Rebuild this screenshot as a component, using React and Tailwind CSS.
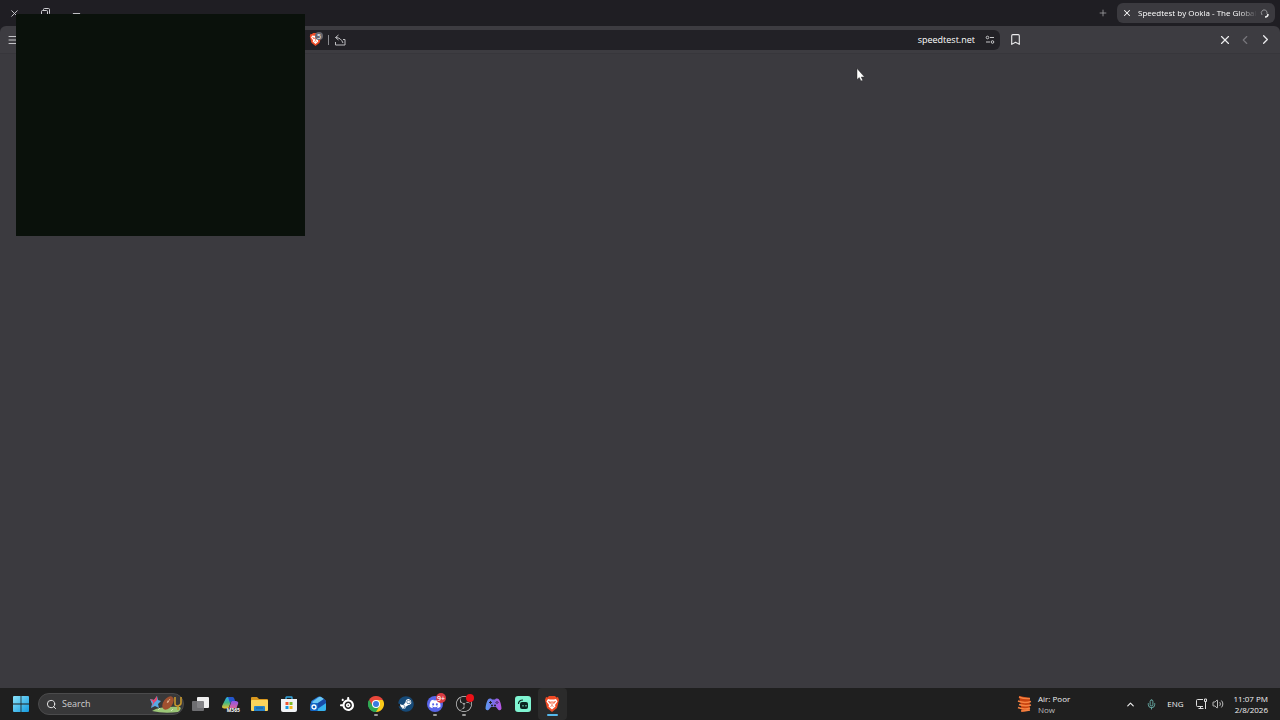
import React from 'react';
import { Bookmark, ChevronLeft, ChevronRight, ChevronUp, Menu, Mic, Minus, Plus, Search, Volume2, X } from 'lucide-react';
import { FaDiscord, FaSteam } from 'react-icons/fa';
import { SiObsstudio, SiSteelseries } from 'react-icons/si';

const WindowsLogo = () => (
  <svg width="16" height="16" viewBox="0 0 16 16">
    <defs>
      <linearGradient id="win" x1="0" y1="0" x2="1" y2="1">
        <stop offset="0" stopColor="#8be3fb" />
        <stop offset="1" stopColor="#149bdf" />
      </linearGradient>
    </defs>
    <path fill="url(#win)" d="M0 1a1 1 0 0 1 1-1h6.6v7.6H0zM8.4 0H15a1 1 0 0 1 1 1v6.6H8.4zM0 8.4h7.6V16H1a1 1 0 0 1-1-1zM8.4 8.4H16V15a1 1 0 0 1-1 1H8.4z" />
  </svg>
);

const FootballArt = () => (
  <svg width="32" height="18" viewBox="0 0 32 18">
    <path d="M2 16Q10 11 30 12Q32 14 28 17Q14 19 2 16z" fill="#9cc777" />
    <path d="M25 2v7q0 2 3 2q3-1 3-3V2M28 11v4" fill="none" stroke="#c7982c" strokeWidth="1.6" />
    <path d="M0 4l4 1 3-4 1 4 3 1-3 3 1 4-4-2-4 2 1-4z" fill="#58a9e4" />
    <path d="M0 4l4 1 3-4 0 4-3 3-2 4 1-5z" fill="#e8476c" />
    <ellipse cx="18" cy="8" rx="7.500" ry="4.500" transform="rotate(-54 18 8)" fill="#a0502f" />
    <path d="M17 8l3-4M17 6l2 1" stroke="#e9c5a4" strokeWidth=".8" />
    <path d="M8 15l2-2M21 16l2-2" stroke="#e9f3d6" strokeWidth=".7" />
  </svg>
);

const TaskView = () => (
  <svg width="17" height="16" viewBox="0 0 17 16">
    <rect x="5" y="1" width="12" height="11" rx="1" fill="#efefef" />
    <rect x="0" y="5" width="12" height="10" rx="1" fill="#77777a" opacity=".9" />
  </svg>
);

const CopilotIcon = () => (
  <span className="relative flex">
    <svg width="18" height="16" viewBox="0 0 18 16">
      <defs>
        <linearGradient id="copA" x1="0" y1="0" x2="0" y2="1">
          <stop offset="0" stopColor="#29a9f0" />
          <stop offset=".5" stopColor="#43b883" />
          <stop offset="1" stopColor="#f1c32e" />
        </linearGradient>
        <linearGradient id="copB" x1="0" y1="0" x2="0" y2="1">
          <stop offset="0" stopColor="#8c55e9" />
          <stop offset="1" stopColor="#f06a83" />
        </linearGradient>
      </defs>
      <path d="M5 2Q5.600 1 7 1h4.500L8 11Q7.500 12.500 6 12.500H3Q0 12 1.500 9z" fill="url(#copA)" />
      <path d="M7 1h4.500Q13 1 13.500 3l.5 2h-3Q9.500 5 9 7z" fill="#2456cd" />
      <path d="M10.500 5H15Q18 5.500 17 8l-1.500 4Q15 14 13 14H7.500z" fill="url(#copB)" />
    </svg>
    <span className="absolute -right-px -bottom-px bg-[#202020] text-[5px] leading-[5px] font-bold text-white">M365</span>
  </span>
);

const FolderIcon = () => (
  <svg width="17" height="16" viewBox="0 0 17 16">
    <path d="M0 2Q0 1 1 1h5l2 2h8q1 0 1 1v4H0z" fill="#d9981f" />
    <path d="M0 5Q0 4 1 4h15q1 0 1 1v9q0 1-1 1H1q-1 0-1-1z" fill="#fbd45c" />
    <path d="M3 15v-4q0-1 1-1h9q1 0 1 1v4z" fill="#2783c9" />
    <path d="M5 12h7" stroke="#155f9d" />
  </svg>
);

const StoreIcon = () => (
  <svg width="16" height="16" viewBox="0 0 16 16">
    <path d="M5 4V1.500Q5 1 5.500 1h5q.5 0 .5.500V4" fill="none" stroke="#35a9e2" strokeWidth="1.400" />
    <path d="M0 3h16v11q0 2-2 2H2q-2 0-2-2z" fill="#f1f3f5" />
    <path d="M4.500 6h3v3h-3z" fill="#ef5530" />
    <path d="M8.500 6h3v3h-3z" fill="#7fba28" />
    <path d="M4.500 10h3v3h-3z" fill="#1898e0" />
    <path d="M8.500 10h3v3h-3z" fill="#f5b71c" />
  </svg>
);

const OutlookIcon = () => (
  <svg width="16" height="16" viewBox="0 0 16 16">
    <path d="M1 6q0-1 1-1.500L8 .800q1.500-.8 3 0l4 3q1 .8 1 2V13q0 2-2 2H3q-2 0-2-2z" fill="#2474d5" />
    <path d="M2 6l7-5q1-.5 2 0l3 2-9 6z" fill="#69c6f4" />
    <path d="M5 15L16 7v6q0 2-2 2z" fill="#36b3ee" />
    <path d="M5 9l9-6 2 2.500V7l-9 6z" fill="#174ba8" />
    <rect x="0" y="7" width="8" height="8" rx="1.500" fill="#1265c4" />
    <circle cx="4" cy="11" r="2" fill="none" stroke="#fff" strokeWidth="1.300" />
  </svg>
);

const ChromeIcon = () => (
  <svg width="16" height="16" viewBox="0 0 16 16">
    <path d="M8 8L1.070 4A8 8 0 0 1 14.930 4z" fill="#e9483b" />
    <path d="M8 8L14.930 4A8 8 0 0 1 8 16z" fill="#fbc919" />
    <path d="M8 8L8 16A8 8 0 0 1 1.070 4z" fill="#2fa853" />
    <path d="M8 4h6.930L11.500 10z" fill="#fbc919" />
    <path d="M11.500 10L8 16 4.500 10z" fill="#2fa853" />
    <path d="M4.540 10L1.070 4 8 4z" fill="#e9483b" />
    <path d="M1.070 4L4.540 10 8 16A8 8 0 0 1 1.070 4" fill="#2fa853" />
    <circle cx="8" cy="8" r="4" fill="#fff" />
    <circle cx="8" cy="8" r="3" fill="#3a7be0" />
  </svg>
);

const SteamIcon = () => (
  <span className="relative flex size-4 items-center justify-center">
    <span className="absolute size-3 rounded-full bg-white"></span>
    <FaSteam className="relative size-4 text-[#164a78]" />
  </span>
);

const DiscordIcon = () => (
  <span className="relative flex size-4 items-center justify-center rounded-full bg-[#5865ea]">
    <FaDiscord className="size-3 text-white" />
    <span className="absolute -top-[3px] -right-[3px] flex size-[10px] items-center justify-center rounded-full bg-[#d93b43] text-[7px] leading-none font-semibold text-white">
      9+
    </span>
  </span>
);

const ObsIcon = () => (
  <span className="relative flex">
    <SiObsstudio className="size-4 text-[#c9c9c9]" />
    <span className="absolute -top-[2px] -right-[2px] size-2 rounded-full bg-[#ed1118]"></span>
  </span>
);

const GamepadIcon = () => (
  <svg width="17" height="15" viewBox="0 0 17 15">
    <defs>
      <linearGradient id="pad">
        <stop offset="0" stopColor="#5b9df0" />
        <stop offset=".5" stopColor="#7b6ceb" />
        <stop offset="1" stopColor="#bd55e4" />
      </linearGradient>
    </defs>
    <path d="M3 2.500Q4 1 6 1.500l1 1h3l1-1q2-.5 3 1 2 3 2.500 9-.5 2.500-3 1.500L11 10H6l-2.500 3Q1 14 .500 11.500 1 5.500 3 2.500z" fill="url(#pad)" />
    <path d="M5.500 4v3M4 5.500h3" stroke="#222" />
    <path d="M10.500 5.500h1M12.500 5.500h1M11.500 4.500h1M11.500 6.500h1" stroke="#262042" />
    <circle cx="7" cy="8.500" r="1" fill="#222" />
    <circle cx="10" cy="8.500" r="1" fill="#222" />
  </svg>
);

const StreamlabsIcon = () => (
  <svg width="16" height="16" viewBox="0 0 16 16">
    <rect width="16" height="16" rx="3" fill="#80f5d2" />
    <rect x="5" y="6" width="8" height="7" rx="2" fill="#0b2420" />
    <path d="M3.500 8q0-4 4.500-4" fill="none" stroke="#0b2420" strokeWidth="1.200" />
    <path d="M8 9v1.500M11 9v1.500" stroke="#80f5d2" />
  </svg>
);

const BraveIcon = ({ size }) => (
  <svg width={size} height={size} viewBox="0 0 16 16">
    <path d="M5 0h6l1.500 1.500L14 1l1 3-.5 2-1.500 6-5 4-5-4-1.500-6L1 4l1-3 1.500.5z" fill="#f04b25" />
    <path d="M4 3l2 .5h4l2-.5 1.500 2.500-2.500 3.500 .5 1.500L8 13.500 4.500 10.500 5 9l-2.500-3.500z" fill="#fff" />
    <path d="M4.500 5.500l2.500.8-.8 1.200zM11.500 5.500L9 6.300l.8 1.200zM8 5v4M6.500 10.500L8 9.500l1.500 1" fill="none" stroke="#f04b25" strokeWidth=".8" />
  </svg>
);

const AirIcon = () => (
  <svg width="16" height="18" viewBox="0 0 16 18">
    <path d="M2 1l11 2-.5 12L5 17z" fill="#c8420f" />
    <path d="M2 2q5 2 11 1.500M1 6q6 2.500 13 .5M2 9.500q6 2 12 .5M1 12.500q6 2.500 12 .5M4 16q4 0 9-1" fill="none" stroke="#f58242" strokeWidth="1.500" />
  </svg>
);

const NetworkIcon = () => (
  <svg width="12" height="12" viewBox="0 0 12 12" fill="none" stroke="#dedede">
    <path d="M7 1.500H1.500q-1 0-1 1v5q0 1 1 1H7M4.500 8.500v2.500M2.500 10.500h5" />
    <path d="M8.500 1v2.500h2V1zM9.500 3.500V11" />
  </svg>
);

const RestoreIcon = () => (
  <svg width="9" height="9" viewBox="0 0 9 9" fill="none" stroke="currentColor">
    <path d="M2.500 2.500v-1q0-1 1-1h4q1 0 1 1v4q0 1-1 1" />
    <rect x=".5" y="2.500" width="6" height="6" rx="1" />
  </svg>
);

const ShareIcon = () => (
  <svg width="12" height="12" viewBox="0 0 12 12" fill="none" stroke="#bdbdc0">
    <path d="M1.500 8v3H11V5.500h-2M4.500 1L1.500 3.500l3 2.500M1.500 3.500Q7 3.500 9 9" />
  </svg>
);

const TuneIcon = () => (
  <svg width="10" height="10" viewBox="0 0 10 10" fill="none" stroke="#c8c8ca">
    <circle cx="2.500" cy="2.500" r="1.300" />
    <path d="M5 2.500h4M1 7h4" />
    <circle cx="7.500" cy="7" r="1.300" />
  </svg>
);

const SpinnerIcon = () => (
  <svg width="10" height="10" viewBox="0 0 10 10" fill="none">
    <path d="M2 7Q0 4 3 2q3-1 4 2v2" stroke="#929296" />
    <path d="M5 9q3 0 3-3" stroke="#eee" strokeWidth="1.500" />
  </svg>
);

const apps = [
  { name: 'Task view', icon: <TaskView /> },
  { name: 'Microsoft 365 Copilot', icon: <CopilotIcon /> },
  { name: 'File Explorer', icon: <FolderIcon /> },
  { name: 'Microsoft Store', icon: <StoreIcon /> },
  { name: 'Outlook', icon: <OutlookIcon /> },
  { name: 'SteelSeries', icon: <SiSteelseries className="size-[14px] text-white" /> },
  { name: 'Chrome', icon: <ChromeIcon />, running: true },
  { name: 'Steam', icon: <SteamIcon /> },
  { name: 'Discord', icon: <DiscordIcon />, running: true },
  { name: 'OBS Studio', icon: <ObsIcon />, running: true },
  { name: 'Controller', icon: <GamepadIcon /> },
  { name: 'Streamlabs', icon: <StreamlabsIcon /> },
  { name: 'Brave', icon: <BraveIcon size={16} />, active: true },
];

const TabStrip = () => (
  <div className="flex h-[26px] items-center justify-between bg-[#1f1e23] pr-[5px] pl-[9px] text-[#cfcfd2]">
    <div className="flex gap-5">
      <button aria-label="Close window" className="flex w-[11px] justify-center"><X size={11} /></button>
      <button aria-label="Restore window" className="flex w-[11px] justify-center"><RestoreIcon /></button>
      <button aria-label="Minimize window" className="flex w-[11px] justify-center"><Minus size={11} /></button>
    </div>
    <div className="flex items-center gap-2">
      <button aria-label="New tab" className="flex w-3 justify-center text-[#9c9ca0]"><Plus size={10} /></button>
      <div className="flex h-[20px] w-[158px] items-center rounded-md bg-[#3b3a3f] px-[5px]">
        <button aria-label="Close tab" className="flex shrink-0 text-white"><X size={10} strokeWidth={2.5} /></button>
        <span className="ml-[6px] shrink-0 mask-r-from-85% text-[8px] leading-3 whitespace-nowrap text-white">
          Speedtest by Ookla - The Global
        </span>
        <span className="ml-auto flex shrink-0"><SpinnerIcon /></span>
      </div>
    </div>
  </div>
);

const Toolbar = () => (
  <div className="bg-[#1f1e23]">
    <div className="flex h-7 items-center rounded-t-md border-b border-[#37363b] bg-[#3d3c41]">
      <button aria-label="Menu" className="flex w-[26px] justify-center text-[#c5c5c8]"><Menu size={12} /></button>
      <div className="ml-[270px] flex h-[20px] min-w-0 flex-1 items-center rounded-md bg-[#222126] pr-[5px] pl-[13px]">
        <button aria-label="Brave Shields" className="relative flex">
          <BraveIcon size={13} />
          <span className="absolute -top-px -right-px flex size-2 items-center justify-center rounded-sm bg-[#66666d] text-[7px] leading-none text-white">5</span>
        </button>
        <span className="ml-[6px] h-[10px] w-px bg-[#8b8b90]"></span>
        <button aria-label="Share" className="ml-[5px] flex"><ShareIcon /></button>
        <input
          aria-label="Address"
          type="text"
          defaultValue="speedtest.net"
          className="min-w-0 flex-1 bg-transparent text-right text-[9px] leading-4 text-white outline-none"
        />
        <button aria-label="Site settings" className="ml-[10px] flex"><TuneIcon /></button>
      </div>
      <div className="flex w-[280px] items-center justify-between pr-[7px] pl-[9px] text-[#ececee]">
        <button aria-label="Bookmark this page"><Bookmark size={13} /></button>
        <div className="flex items-center gap-[6px]">
          <button aria-label="Stop loading"><X size={14} /></button>
          <button aria-label="Forward" className="text-[#77767b]"><ChevronLeft size={14} /></button>
          <button aria-label="Back"><ChevronRight size={15} /></button>
        </div>
      </div>
    </div>
  </div>
);

const Taskbar = () => (
  <footer className="flex h-8 items-center bg-[#1f1f1f] text-[#f0f0f0]">
    <button aria-label="Start" className="ml-[13px] flex"><WindowsLogo /></button>
    <div className="ml-[9px] flex h-[22px] w-[146px] items-center rounded-full border border-[#4b4b4c] bg-[#383839] pr-px pl-[7px]">
      <Search size={11} className="shrink-0" />
      <input
        aria-label="Search"
        type="search"
        placeholder="Search"
        className="ml-[5px] min-w-0 flex-1 bg-transparent text-[9px] leading-4 outline-none placeholder:text-[#cfcfcf]"
      />
      <FootballArt />
    </div>
    <nav className="ml-[2px] grid h-full w-[381px] grid-cols-13">
      {apps.map((app) => (
        <button
          key={app.name}
          aria-label={app.name}
          className={`relative flex h-full items-center justify-center rounded-sm ${app.active ? 'bg-[#2b2b2b]' : ''}`}
        >
          {app.icon}
          {app.running && <span className="absolute bottom-[4px] h-[2px] w-1 rounded-full bg-[#9a9a9a]"></span>}
          {app.active && <span className="absolute bottom-[4px] h-[2px] w-[11px] rounded-full bg-[#55b9ec]"></span>}
        </button>
      ))}
    </nav>
    <button className="ml-auto flex items-center gap-[5px] text-left text-[8px] leading-[11px]">
      <AirIcon />
      <span>
        <span className="block">Air: Poor</span>
        <span className="block text-[#bcbcbc]">Now</span>
      </span>
    </button>
    <div className="ml-[55px] flex items-center pr-3">
      <button aria-label="Show hidden icons"><ChevronUp size={11} strokeWidth={2.5} /></button>
      <button aria-label="Microphone" className="ml-[10px] text-[#6cb3ad]"><Mic size={11} /></button>
      <span className="ml-[10px] text-[8px] leading-3">ENG</span>
      <button aria-label="Network" className="ml-3"><NetworkIcon /></button>
      <button aria-label="Volume" className="ml-1"><Volume2 size={12} strokeWidth={1.5} /></button>
      <div className="ml-[10px] text-right text-[8px] leading-[11px]">
        <div>11:07 PM</div>
        <div>2/8/2026</div>
      </div>
    </div>
  </footer>
);

const App = () => {
  return (
    <div className="relative flex min-h-screen flex-col overflow-hidden bg-[#3b3a3f] font-['Open_Sans','Noto_Sans',sans-serif]">
      <TabStrip />
      <Toolbar />
      <main className="flex-1"></main>
      <Taskbar />
      <div className="absolute top-[14px] left-4 h-[222px] w-[289px] bg-[#0a110b]"></div>
      <svg className="absolute top-[68px] left-[856px]" width="9" height="14" viewBox="0 0 9 14">
        <path d="M1 .500v11l2.300-2 1.700 3.500 1.700-.8L5.200 9h3.300z" fill="#fff" stroke="#222" strokeWidth=".4" />
      </svg>
    </div>
  );
};

export default App;
